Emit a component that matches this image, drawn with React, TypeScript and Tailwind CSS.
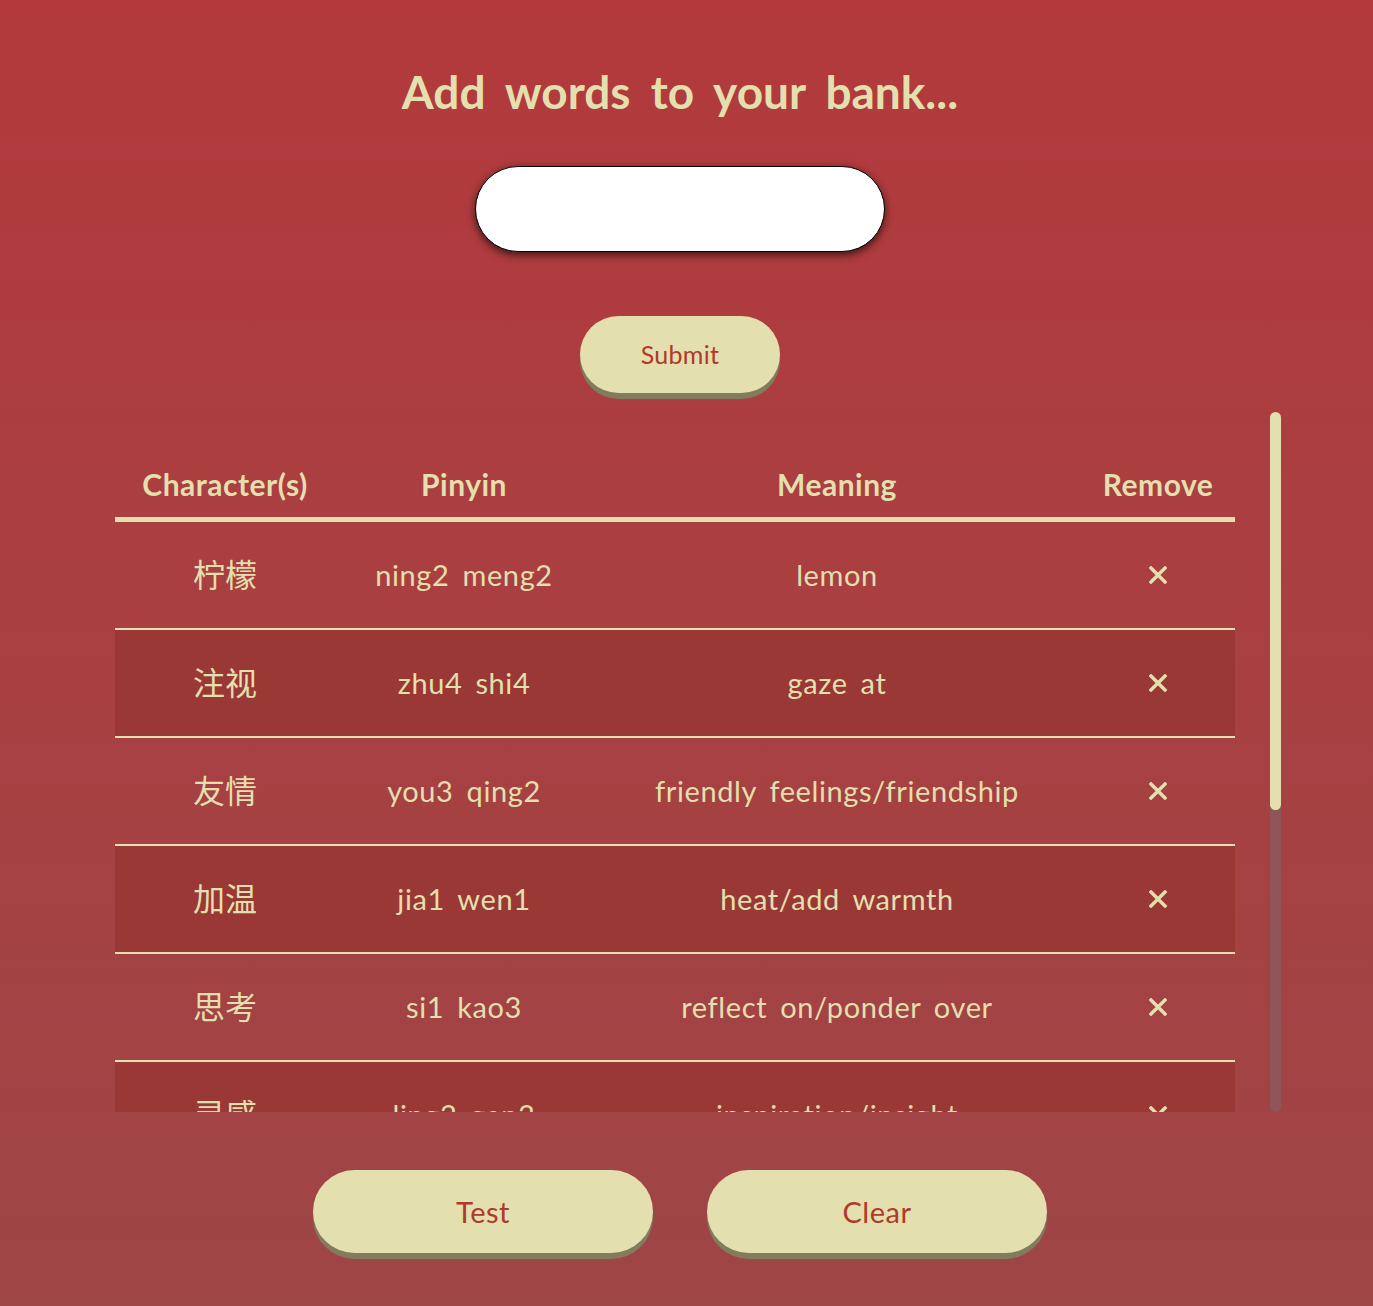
const words = [
  { zi: '柠檬', py: 'ning2 meng2', en: 'lemon' },
  { zi: '注视', py: 'zhu4 shi4', en: 'gaze at' },
  { zi: '友情', py: 'you3 qing2', en: 'friendly feelings/friendship' },
  { zi: '加温', py: 'jia1 wen1', en: 'heat/add warmth' },
  { zi: '思考', py: 'si1 kao3', en: 'reflect on/ponder over' },
  { zi: '灵感', py: 'ling2 gan3', en: 'inspiration/insight' },
]

const font = { fontFamily: 'Lato, "Noto Sans CJK SC", sans-serif' }

function Cross() {
  return (
    <svg width="18" height="18" viewBox="0 0 18 18" className="inline-block">
      <path d="M2 2 L16 16 M16 2 L2 16" stroke="#e4dfae" strokeWidth="3.4" strokeLinecap="square" />
    </svg>
  )
}

export default function App() {
  return (
    <div
      className="min-h-screen w-full bg-gradient-to-b from-[#b3393c] to-[#9e4546] text-[#e4dfae] pb-[47px]"
      style={font}
    >
      <div className="w-[1360px] flex flex-col items-center">
        <h1 className="pt-[65px] text-[46px] leading-[54px] font-bold tracking-[0px] [word-spacing:9px]">
          Add words to your bank...
        </h1>

        <input
          type="text"
          className="mt-[47px] h-[86px] w-[410px] rounded-full bg-white border border-black shadow-[0_3px_8px_rgba(0,0,0,0.65)] outline-none px-8 text-2xl text-black"
        />

        <button className="mt-[64px] h-[77px] w-[200px] rounded-full bg-[#e4dfae] text-[#b0392b] text-[25px] tracking-[0.3px] shadow-[0_6px_0_#807c5c]">
          Submit
        </button>

        <div className="mt-[19px] self-start ml-[115px] flex gap-[35px]">
          <div className="w-[1120px] h-[700px] overflow-hidden">
            <div className="pt-[40px]">
              <div className="grid grid-cols-[220px_258px_488px_154px] h-[70px] items-center border-b-[5px] border-[#e4dfae] text-[30px] font-bold tracking-[0.5px] text-center">
                <div>Character(s)</div>
                <div>Pinyin</div>
                <div>Meaning</div>
                <div>Remove</div>
              </div>
              {words.map((w, i) => (
                <div
                  key={w.zi}
                  className={
                    'grid grid-cols-[220px_258px_488px_154px] h-[108px] items-center border-b-2 border-[#e4dfae] text-[29px] tracking-[0.6px] [word-spacing:5px] text-center ' +
                    (i % 2 === 1 ? 'bg-[#9a3835]' : '')
                  }
                >
                  <div className="text-[32px] tracking-normal">{w.zi}</div>
                  <div>{w.py}</div>
                  <div>{w.en}</div>
                  <div className="flex justify-center">
                    <Cross />
                  </div>
                </div>
              ))}
            </div>
          </div>

          <div className="w-[11px] h-[700px] rounded-full bg-[#8f5558] flex flex-col">
            <div className="h-[398px] w-full rounded-full bg-[#e4dfae]" />
          </div>
        </div>

        <div className="mt-[58px] flex gap-[54px]">
          <button className="h-[83px] w-[340px] rounded-full bg-[#e4dfae] text-[#b0392b] text-[29px] tracking-[0.5px] shadow-[0_6px_0_#807c5c]">
            Test
          </button>
          <button className="h-[83px] w-[340px] rounded-full bg-[#e4dfae] text-[#b0392b] text-[29px] tracking-[0.5px] shadow-[0_6px_0_#807c5c]">
            Clear
          </button>
        </div>
      </div>
    </div>
  )
}
